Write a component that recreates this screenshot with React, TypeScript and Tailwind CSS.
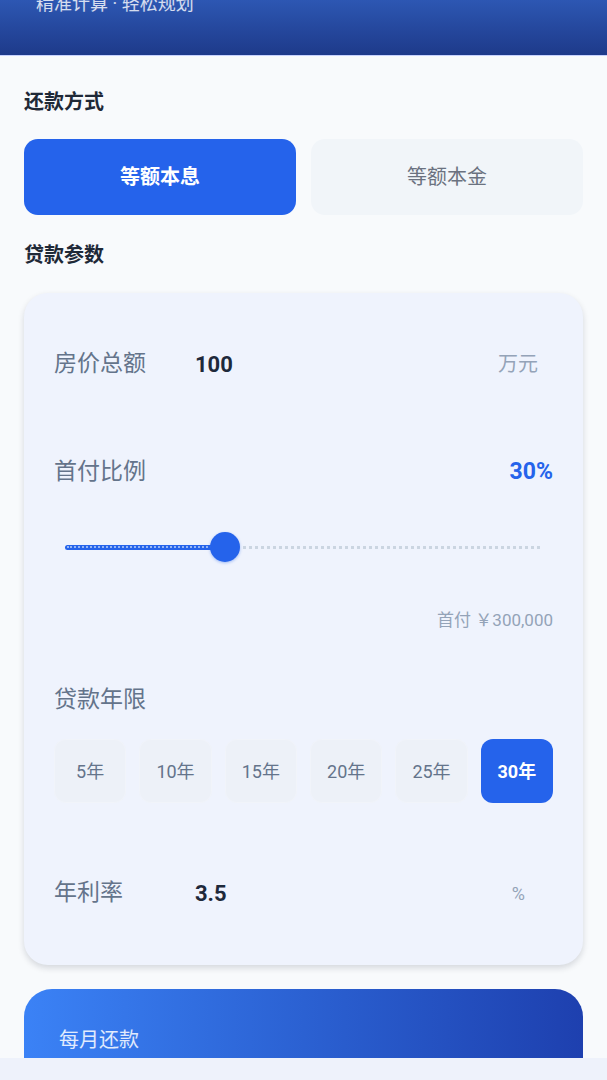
import React from "react";

const FONT = { fontFamily: "Roboto, 'Noto Sans CJK SC', sans-serif" };

const YEARS = [5, 10, 15, 20, 25, 30];

export default function App() {
  const years = 30;

  return (
    <div className="min-h-screen bg-[#f8fafc]" style={FONT}>
      {/* Header (page is scrolled, only the bottom shows) */}
      <header className="h-[56px] overflow-hidden bg-gradient-to-b from-[#2d57b3] to-[#1e3a8a] border-b border-[#c7d2fe] px-9">
        <p className="-mt-[8px] text-[18px] leading-[24px] text-white/80">精准计算 · 轻松规划</p>
      </header>

      <main className="px-6 pb-40">
        <h2 className="mt-[32px] text-[20px] leading-[28px] font-semibold text-[#1f2937]">还款方式</h2>

        <div className="mt-[23px] grid grid-cols-2 gap-[15px]">
          <button className="h-[76px] rounded-[14px] bg-[#2563eb] text-[20px] font-bold text-white">
            等额本息
          </button>
          <button className="h-[76px] rounded-[14px] bg-[#f1f5f9] text-[20px] text-[#6b7280]">
            等额本金
          </button>
        </div>

        <h2 className="mt-[26px] text-[20px] leading-[28px] font-semibold text-[#1f2937]">贷款参数</h2>

        {/* Parameters card */}
        <section className="mt-[24px] rounded-[24px] bg-[#eff3fd] px-[30px] pt-[47px] pb-[48px] shadow-[0_3px_6px_rgba(15,23,42,0.15)]">
          <div className="flex h-[48px] items-center">
            <span className="w-[141px] text-[23px] text-[#64748b]">房价总额</span>
            <span className="flex-1 text-[22px] font-bold text-[#1e293b]">100</span>
            <span className="mr-[15px] text-[20px] text-[#94a3b8]">万元</span>
          </div>

          <div className="mt-[68px] flex h-[32px] items-center justify-between">
            <span className="text-[23px] text-[#64748b]">首付比例</span>
            <span className="text-[23px] font-bold text-[#2563eb]">30%</span>
          </div>

          {/* Slider */}
          <div className="relative mt-[44px] ml-[11px] mr-[13px] flex h-[30px] items-center">
            <div className="flex h-[5px] w-[160px] items-center rounded-full bg-[#2563eb] px-[2px]">
              <div className="w-full border-t-[2px] border-dotted border-[#93b4f5]" />
            </div>
            <div className="flex-1 border-t-[3px] border-dotted border-[#cbd5e1]" />
            <div className="absolute left-[145px] top-0 h-[30px] w-[30px] rounded-full bg-[#2563eb] shadow-[0_1px_3px_rgba(37,99,235,0.4)]" />
          </div>

          <p className="mt-[46px] text-right text-[17px] leading-[24px] text-[#94a3b8]">首付 ￥300,000</p>

          <p className="mt-[52px] text-[23px] leading-[32px] text-[#64748b]">贷款年限</p>

          <div className="mt-[23px] grid grid-cols-6 gap-[13px]">
            {YEARS.map((y) =>
              y === years ? (
                <button
                  key={y}
                  className="h-[64px] rounded-[12px] bg-[#2563eb] text-[18px] font-bold text-white"
                >
                  {y}年
                </button>
              ) : (
                <button
                  key={y}
                  className="h-[64px] rounded-[12px] border border-[#f1f4fa] bg-[#edf1f8] text-[18px] text-[#64748b]"
                >
                  {y}年
                </button>
              )
            )}
          </div>

          <div className="mt-[66px] flex h-[48px] items-center">
            <span className="w-[141px] text-[23px] text-[#64748b]">年利率</span>
            <span className="flex-1 text-[22px] font-bold text-[#1e293b]">3.5</span>
            <span className="mr-[28px] text-[18px] text-[#94a3b8]">%</span>
          </div>
        </section>

        {/* Result card */}
        <section className="mt-[24px] h-[220px] rounded-[28px] bg-gradient-to-r from-[#3b82f6] to-[#1e40af] px-[35px] pt-[37px]">
          <p className="text-[20px] leading-[28px] text-white/85">每月还款</p>
        </section>
      </main>

      {/* Bottom bar */}
      <div className="fixed bottom-0 left-0 right-0 h-[22px] bg-[#eef2fb]" />
    </div>
  );
}
